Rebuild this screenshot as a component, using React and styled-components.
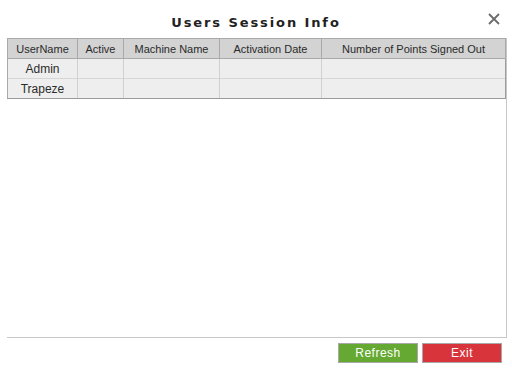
import React from "react";
import styled, { createGlobalStyle } from "styled-components";

const GlobalStyle = createGlobalStyle`
    html, body {
        margin: 0;
        padding: 0;
        background: #fff;
    }
    body {
        font-family: "Liberation Sans", Arial, sans-serif;
    }
`;

const Dialog = styled.div`
    width: 512px;
    height: 374px;
    display: flex;
    flex-direction: column;
    background: #fff;
    box-sizing: border-box;
`;

const Header = styled.div`
    height: 38px;
    position: relative;
    display: flex;
    align-items: center;
    justify-content: center;
`;

const Title = styled.h3`
    margin: 7px 0 0 0;
    font-family: "DejaVu Sans", Verdana, sans-serif;
    font-size: 13px;
    font-weight: bold;
    letter-spacing: 1.9px;
    color: #222;
`;

const Close = styled.button`
    position: absolute;
    right: 11px;
    top: 12px;
    width: 14px;
    height: 14px;
    padding: 0;
    border: none;
    background: none;
    cursor: pointer;
`;

const GridBox = styled.div`
    flex: 1;
    margin: 0 5px 0 7px;
    border-right: 1px solid #c8c8c8;
    border-bottom: 1px solid #c8c8c8;
`;

const Table = styled.table`
    width: 100%;
    border-collapse: collapse;
    table-layout: fixed;
    font-size: 11px;
    color: #2a2a2a;
`;

const Th = styled.th`
    height: 19px;
    padding: 0;
    font-weight: normal;
    background: #d3d3d3;
    border: 1px solid #a9a9a9;
    text-align: center;
    width: ${props => props.w}px;
`;

const Td = styled.td`
    height: 19px;
    padding: 0;
    background: #eeeeee;
    border-left: 1px solid #d0d0d0;
    border-right: 1px solid #d0d0d0;
    border-top: 1px solid #d6d6d6;
    text-align: center;
    font-size: 12px;
`;

const Row = styled.tr`
    &:last-child td {
        border-bottom: 1px solid #9c9c9c;
    }
    td:first-child {
        border-left: 1px solid #a9a9a9;
    }
    td:last-child {
        border-right: 1px solid #9c9c9c;
    }
`;

const Footer = styled.div`
    height: 36px;
    display: flex;
    justify-content: flex-end;
    align-items: flex-start;
    gap: 4px;
    padding: 5px 10px 0 0;
    box-sizing: border-box;
`;

const Button = styled.button`
    width: 80px;
    height: 20px;
    border: 1px solid #a8a8a8;
    background: ${props => props.bg};
    color: #fff;
    font-family: "Liberation Sans", Arial, sans-serif;
    font-size: 12px;
    letter-spacing: 0.5px;
    padding: 0;
    cursor: pointer;
`;

const columns = [
    { name: "UserName", w: 69 },
    { name: "Active", w: 45 },
    { name: "Machine Name", w: 95 },
    { name: "Activation Date", w: 101 },
    { name: "Number of Points Signed Out" },
];

const users = ["Admin", "Trapeze"];

const App = () => (
    <>
        <GlobalStyle />
        <Dialog>
            <Header>
                <Title>Users Session Info</Title>
                <Close aria-label="close">
                    <svg width="14" height="14" viewBox="0 0 14 14">
                        <path d="M2 2 L12 12 M12 2 L2 12" stroke="#6b6b6b" strokeWidth="1.8" />
                    </svg>
                </Close>
            </Header>
            <GridBox>
                <Table>
                    <thead>
                        <tr>
                            {columns.map(col => (
                                <Th key={col.name} w={col.w}>{col.name}</Th>
                            ))}
                        </tr>
                    </thead>
                    <tbody>
                        {users.map(user => (
                            <Row key={user}>
                                <Td>{user}</Td>
                                <Td />
                                <Td />
                                <Td />
                                <Td />
                            </Row>
                        ))}
                    </tbody>
                </Table>
            </GridBox>
            <Footer>
                <Button bg="#65a932">Refresh</Button>
                <Button bg="#d8343c">Exit</Button>
            </Footer>
        </Dialog>
    </>
);

export default App;
